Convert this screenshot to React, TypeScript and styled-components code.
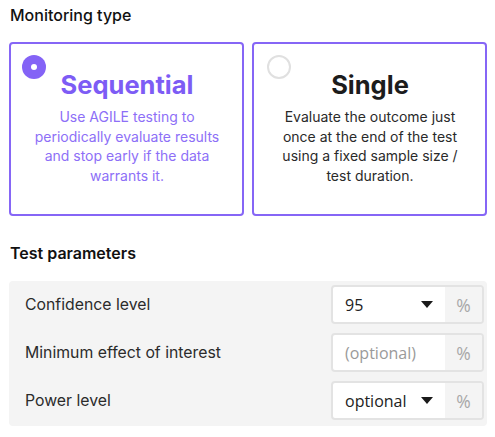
import styled, { createGlobalStyle } from 'styled-components';

const GlobalStyle = createGlobalStyle`
body {
  margin: 0;
  background: #ffffff;
  font-family: Inter, "Noto Sans", sans-serif;
  color: #151515;
}
`

const Page = styled.div`
padding: 4px 8px 0 9px;
width: 478px;
`

const Heading = styled.h2<{ $weight?: number }>`
margin: 0 0 0 1px;
font-size: 16px;
line-height: 22px;
font-weight: ${p => p.$weight ?? 500};
color: #111;
`

const CardRow = styled.div`
display: grid;
grid-template-columns: 1fr 1fr;
gap: 8px;
margin-top: 16px;
`

const Card = styled.div`
box-sizing: border-box;
height: 174px;
border: 2px solid #8666f6;
border-radius: 4px;
padding: 11px 10px 0 11px;
display: flex;
flex-direction: column;
align-items: center;
cursor: pointer;
`

const Radio = styled.span<{ $checked?: boolean }>`
align-self: flex-start;
box-sizing: border-box;
width: 24px;
height: 24px;
border-radius: 50%;
display: flex;
align-items: center;
justify-content: center;
background: ${p => p.$checked ? '#8463f6' : '#fff'};
border: ${p => p.$checked ? 'none' : '2px solid #e0e0e0'};
margin-left: ${p => p.$checked ? '0' : '2px'};

&::after {
  content: '';
  display: ${p => p.$checked ? 'block' : 'none'};
  width: 6px;
  height: 6px;
  border-radius: 50%;
  background: #fff;
}
`

const CardTitle = styled.div<{ $active?: boolean }>`
margin-top: -9px;
font-size: 25.5px;
line-height: 30px;
font-weight: 700;
color: ${p => p.$active ? '#7d5cf5' : '#1c1c1c'};
`

const CardText = styled.p<{ $active?: boolean }>`
margin: 7px 0 0;
font-size: 14px;
line-height: 19.5px;
text-align: center;
color: ${p => p.$active ? '#8d6ff7' : '#2a2a2a'};
`

const Panel = styled.div`
margin-top: 17px;
background: #f4f4f4;
border-radius: 4px;
padding: 4px 3px 6px 16px;
display: flex;
flex-direction: column;
gap: 9px;
`

const ParamRow = styled.div`
display: flex;
align-items: center;
justify-content: space-between;
height: 39px;
`

const Label = styled.span`
font-size: 15.8px;
color: #2b2b2b;
`

const Field = styled.div`
box-sizing: border-box;
width: 153px;
height: 39px;
border: 2px solid #e3e3e3;
border-radius: 4px;
display: flex;
overflow: hidden;
background: #fff;
`

const Value = styled.div<{ $placeholder?: boolean }>`
flex: 1;
display: flex;
align-items: center;
justify-content: space-between;
padding: 0 12px 0 12px;
font-family: "Open Sans", "Noto Sans", sans-serif;
font-size: 16px;
color: ${p => p.$placeholder ? '#9a9a9a' : '#222'};
`

const Caret = styled.span`
width: 0;
height: 0;
border-left: 6px solid transparent;
border-right: 6px solid transparent;
border-top: 7px solid #1a1a1a;
`

const Suffix = styled.div`
width: 37px;
display: flex;
align-items: center;
justify-content: center;
background: #f4f4f4;
font-family: "Open Sans", "Noto Sans", sans-serif;
font-size: 17.5px;
font-weight: 500;
color: #a8a8a8;
`

function App(): JSX.Element {
  return (
    <Page>
      <GlobalStyle />
      <Heading>Monitoring type</Heading>
      <CardRow>
        <Card>
          <Radio $checked />
          <CardTitle $active>Sequential</CardTitle>
          <CardText $active>
            Use AGILE testing to<br />periodically evaluate results<br />and stop early if the data<br />warrants it.
          </CardText>
        </Card>
        <Card>
          <Radio />
          <CardTitle>Single</CardTitle>
          <CardText>
            Evaluate the outcome just<br />once at the end of the test<br />using a fixed sample size /<br />test duration.
          </CardText>
        </Card>
      </CardRow>
      <Heading $weight={600} style={{ marginTop: 26 }}>Test parameters</Heading>
      <Panel>
        <ParamRow>
          <Label>Confidence level</Label>
          <Field>
            <Value>95<Caret /></Value>
            <Suffix>%</Suffix>
          </Field>
        </ParamRow>
        <ParamRow>
          <Label>Minimum effect of interest</Label>
          <Field>
            <Value $placeholder>(optional)</Value>
            <Suffix>%</Suffix>
          </Field>
        </ParamRow>
        <ParamRow>
          <Label>Power level</Label>
          <Field>
            <Value>optional<Caret /></Value>
            <Suffix>%</Suffix>
          </Field>
        </ParamRow>
      </Panel>
    </Page>
  );
}

export default App;
